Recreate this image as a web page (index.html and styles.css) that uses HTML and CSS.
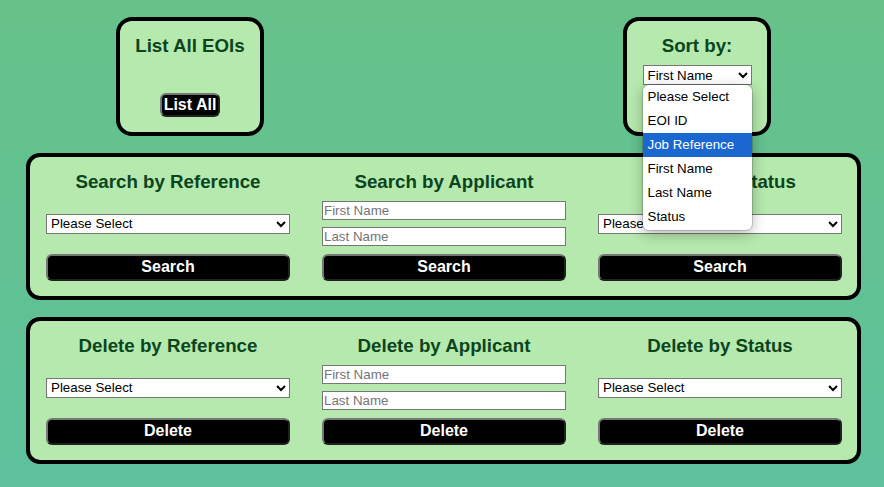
FILE: index.html
```html
<!DOCTYPE html>
<html lang="en">
<head>
<meta charset="utf-8">
<title>Manage EOIs</title>
<link rel="stylesheet" href="styles.css">
</head>
<body>
<div class="top-row">
  <section class="card">
    <h2 class="title">List All EOIs</h2>
    <button class="small-btn" type="button">List All</button>
  </section>
  <section class="card sort-card">
    <h2 class="title">Sort by:</h2>
    <div class="sort-wrap">
      <select class="sort-select">
        <option>First Name</option>
      </select>
      <ul class="popup">
        <li class="opt">Please Select</li>
        <li class="opt">EOI ID</li>
        <li class="opt active">Job Reference</li>
        <li class="opt">First Name</li>
        <li class="opt">Last Name</li>
        <li class="opt">Status</li>
      </ul>
    </div>
  </section>
</div>

<section class="panel">
  <div class="col">
    <h2 class="title">Search by Reference</h2>
    <div class="mid"><select class="field"><option>Please Select</option></select></div>
    <button class="wide-btn" type="button">Search</button>
  </div>
  <div class="col">
    <h2 class="title">Search by Applicant</h2>
    <div class="mid">
      <input class="field" type="text" placeholder="First Name">
      <input class="field" type="text" placeholder="Last Name">
    </div>
    <button class="wide-btn" type="button">Search</button>
  </div>
  <div class="col">
    <h2 class="title">Search by Status</h2>
    <div class="mid"><select class="field"><option>Please Select</option></select></div>
    <button class="wide-btn" type="button">Search</button>
  </div>
</section>

<section class="panel">
  <div class="col">
    <h2 class="title">Delete by Reference</h2>
    <div class="mid"><select class="field"><option>Please Select</option></select></div>
    <button class="wide-btn" type="button">Delete</button>
  </div>
  <div class="col">
    <h2 class="title">Delete by Applicant</h2>
    <div class="mid">
      <input class="field" type="text" placeholder="First Name">
      <input class="field" type="text" placeholder="Last Name">
    </div>
    <button class="wide-btn" type="button">Delete</button>
  </div>
  <div class="col">
    <h2 class="title">Delete by Status</h2>
    <div class="mid"><select class="field"><option>Please Select</option></select></div>
    <button class="wide-btn" type="button">Delete</button>
  </div>
</section>
</body>
</html>
```

FILE: styles.css
```css
html, body {
  margin: 0;
  padding: 0;
}
body {
  width: 884px;
  height: 487px;
  overflow: hidden;
  background: linear-gradient(180deg, #67c289 0%, #5dc19c 100%);
  font-family: "Liberation Sans", Arial, sans-serif;
  padding-top: 17px;
  box-sizing: border-box;
}
.top-row {
  display: flex;
  padding-left: 116px;
  gap: 359px;
  margin-bottom: 17px;
}
.card {
  width: 148px;
  height: 119px;
  box-sizing: border-box;
  border: 4px solid #000;
  border-radius: 16px;
  background: #b6e9ad;
  display: flex;
  flex-direction: column;
  align-items: center;
  padding-top: 14px;
}
.title {
  margin: 0;
  font-size: 18.72px;
  line-height: 22px;
  font-weight: bold;
  color: #0a4520;
  text-align: center;
  white-space: nowrap;
}
.small-btn {
  margin-top: 36px;
  height: 24px;
  padding: 0 2px;
  background: #000;
  color: #fff;
  border: 2px outset #767676;
  border-radius: 6px;
  font-family: "Liberation Sans", Arial, sans-serif;
  font-size: 16px;
  font-weight: bold;
  line-height: 18px;
}
.sort-card .title {
  margin-bottom: 8px;
}
.sort-wrap {
  position: relative;
  width: 109px;
}
.sort-select {
  width: 109px;
  height: 20px;
  font-family: "Liberation Sans", Arial, sans-serif;
  font-size: 13.33px;
  border: 1px solid #767676;
  border-radius: 0;
  background: #fff;
  color: #000;
  padding: 0;
  display: block;
}
.popup {
  position: absolute;
  left: 0;
  top: 20px;
  width: 109px;
  margin: 0;
  padding: 0 0 1px;
  list-style: none;
  background: #fff;
  border-radius: 6px;
  box-shadow: 0 0 0 1px rgba(0,0,0,0.15), 0 4px 14px rgba(0,0,0,0.3);
  overflow: hidden;
  z-index: 5;
}
.opt {
  height: 24px;
  line-height: 24px;
  padding-left: 5px;
  font-size: 13.33px;
  color: #000;
  white-space: nowrap;
}
.opt.active {
  background: #1a67d2;
  color: #fff;
}
.panel {
  margin: 0 0 17px 26px;
  width: 835px;
  height: 147px;
  box-sizing: border-box;
  border: 4px solid #000;
  border-radius: 14px;
  background: #b6e9ad;
  display: grid;
  grid-template-columns: repeat(3, 244px);
  column-gap: 32px;
  padding: 14px 0 0 16px;
}
.col {
  display: flex;
  flex-direction: column;
}
.mid {
  margin-top: 8px;
  height: 45px;
  display: flex;
  flex-direction: column;
  justify-content: center;
  gap: 7px;
}
.field {
  width: 244px;
  height: 19px;
  box-sizing: border-box;
  font-family: "Liberation Sans", Arial, sans-serif;
  font-size: 13.33px;
  border: 1px solid #767676;
  border-radius: 0;
  background: #fff;
  color: #000;
  padding: 0 0 0 1px;
  margin: 0;
}
select.field {
  height: 20px;
  padding: 0;
}
.field::placeholder {
  color: #757575;
}
.wide-btn {
  margin-top: 8px;
  width: 244px;
  height: 27px;
  background: #000;
  color: #fff;
  border: 2px outset #767676;
  border-radius: 6px;
  font-family: "Liberation Sans", Arial, sans-serif;
  font-size: 16px;
  font-weight: bold;
  padding: 0 0 2px;
}
```
